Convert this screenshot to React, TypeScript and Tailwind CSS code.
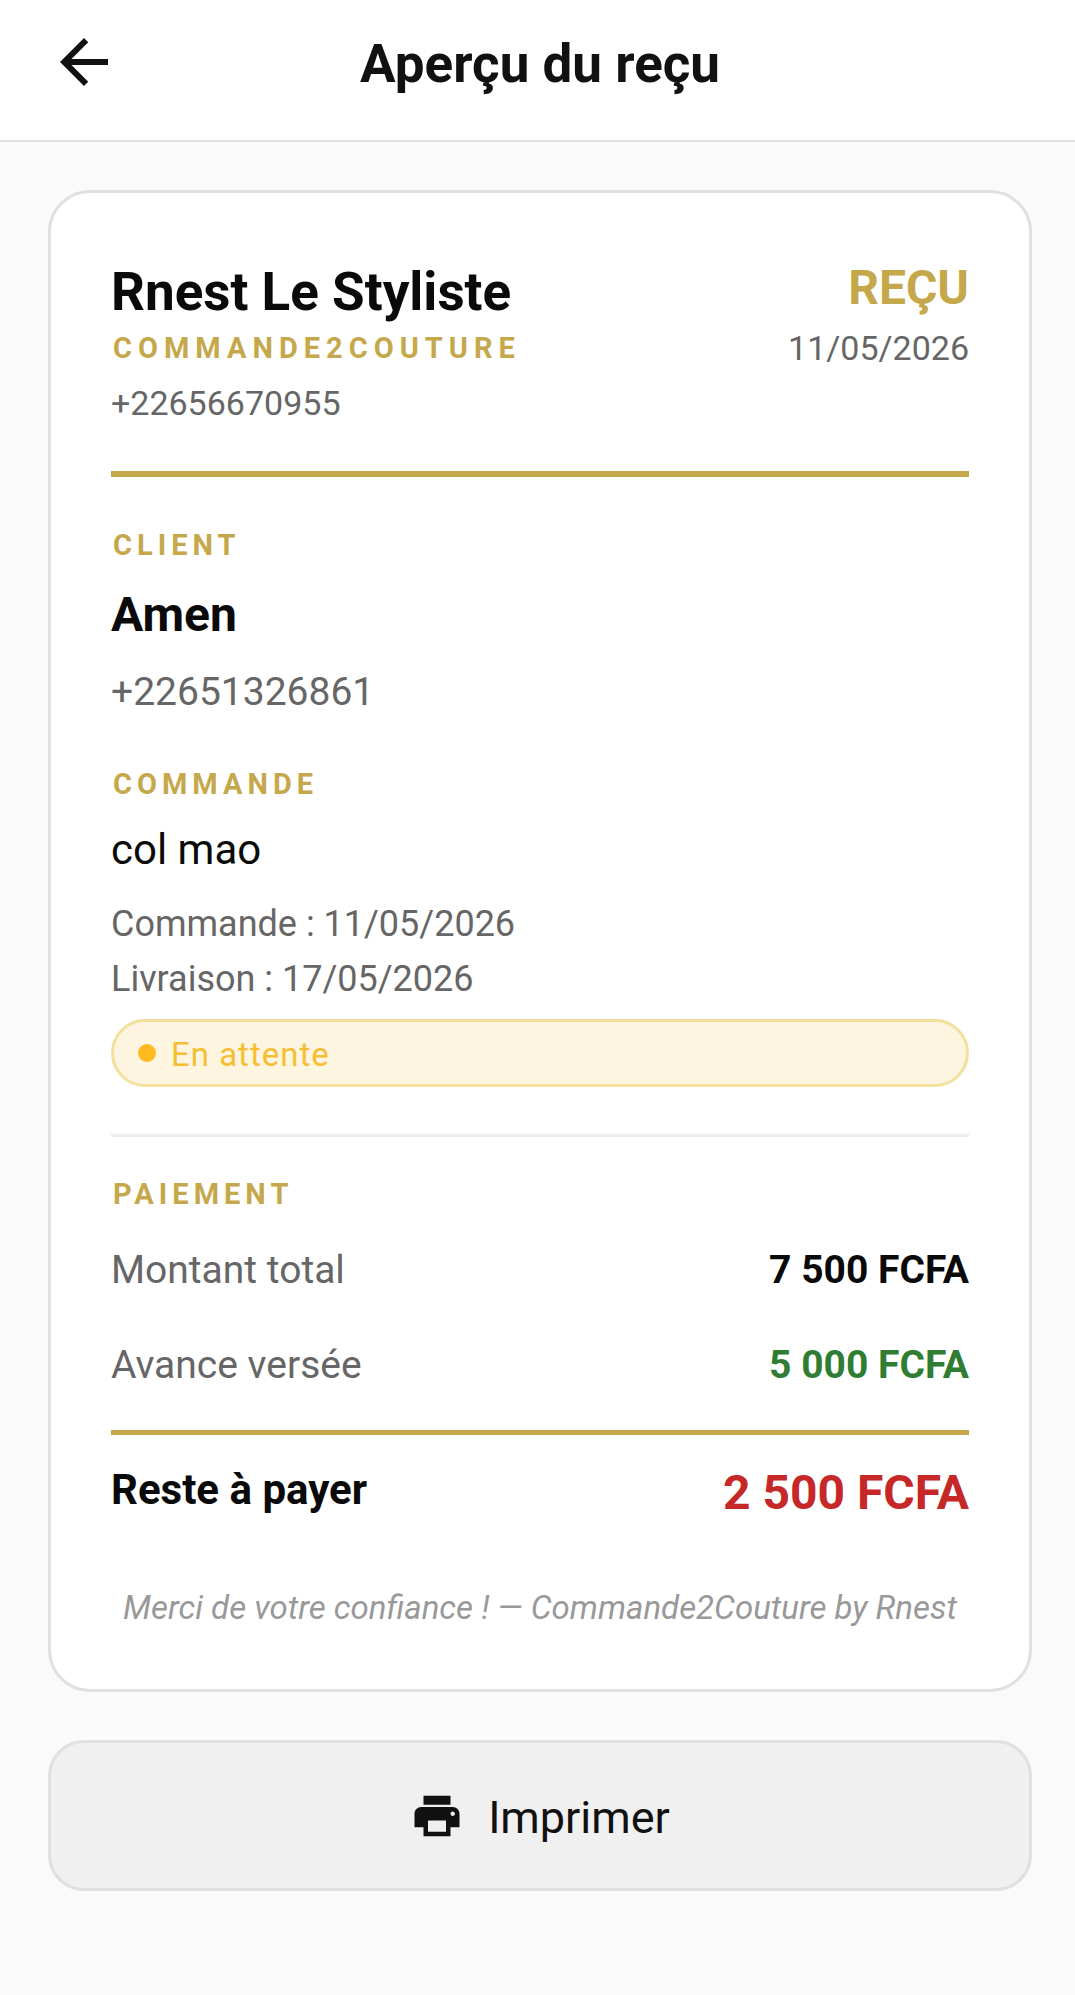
import { MdArrowBack, MdPrint } from "react-icons/md";

interface SectionTitleProps {
  children: string;
}

const SectionTitle = ({ children }: SectionTitleProps) => (
  <h3 className="pl-[2px] text-[29px] leading-[36px] font-bold tracking-[5px] text-[#c5a84b]">
    {children}
  </h3>
);

interface PaymentRowProps {
  label: string;
  amount: string;
  amountClass: string;
}

const PaymentRow = ({ label, amount, amountClass }: PaymentRowProps) => (
  <div className="flex items-center justify-between py-6">
    <dt className="text-[39px] leading-[47px] text-[#666666]">{label}</dt>
    <dd className={`text-[39px] leading-[47px] font-bold ${amountClass}`}>{amount}</dd>
  </div>
);

const App = () => (
  <div className="min-h-screen bg-[#fafafa] font-[Roboto,sans-serif] text-[#0a0a0a]">
    <header className="grid h-[142px] grid-cols-[72px_1fr_72px] items-center border-b-2 border-[#e0e0e0] bg-white pr-[43px] pb-4 pl-12 text-[#111111]">
      <button type="button" aria-label="Retour">
        <MdArrowBack className="size-[72px]" />
      </button>
      <h1 className="pt-1 text-center text-[53px] leading-[64px] font-bold">Aperçu du reçu</h1>
    </header>

    <main className="pt-12 pr-[43px] pl-12">
      <article className="rounded-[42px] border-3 border-[#e0e0e0] bg-white px-[60px] pt-[66px] pb-[57px]">
        <div className="flex items-start justify-between border-b-6 border-[#c5a84b] pb-[44px]">
          <div>
            <h2 className="text-[53px] leading-[66px] font-bold">Rnest Le Styliste</h2>
            <p className="pl-[2px] text-[29px] leading-[46px] font-bold tracking-[6px] text-[#c5a84b]">COMMANDE2COUTURE</p>
            <p className="pt-2 text-[34px] leading-[48px] text-[#666666]">+22656670955</p>
          </div>
          <div className="text-right">
            <p className="text-[48px] leading-[58px] font-bold text-[#c5a84b]">REÇU</p>
            <p className="text-[34px] leading-[62px] text-[#666666]">11/05/2026</p>
          </div>
        </div>

        <section className="pt-[50px]">
          <SectionTitle>CLIENT</SectionTitle>
          <p className="pt-[22px] text-[48px] leading-[60px] font-bold">Amen</p>
          <p className="pt-[23px] text-[39px] leading-[48px] text-[#666666]">+22651326861</p>
        </section>

        <section className="border-b-3 border-[#eeeeee] pt-[50px] pb-[47px]">
          <SectionTitle>COMMANDE</SectionTitle>
          <p className="pt-[21px] text-[42px] leading-[53px]">col mao</p>
          <p className="pt-[21px] text-[36px] leading-[55px] text-[#666666]">Commande : 11/05/2026</p>
          <p className="text-[36px] leading-[55px] text-[#666666]">Livraison : 17/05/2026</p>
          <div className="mt-3 flex h-[68px] items-center gap-[15px] rounded-full border-3 border-[#f2e09c] bg-[#fef5e1] px-6">
            <span className="size-[18px] rounded-full bg-[#ffba20]" />
            <span className="pt-1 text-[33px] tracking-[1px] text-[#f6bf33]">En attente</span>
          </div>
        </section>

        <section className="pt-[39px]">
          <SectionTitle>PAIEMENT</SectionTitle>
          <dl className="pt-[11px]">
            <PaymentRow label="Montant total" amount="7 500 FCFA" amountClass="" />
            <PaymentRow label="Avance versée" amount="5 000 FCFA" amountClass="text-[#2e7d32]" />
            <div className="mt-[17px] flex items-start justify-between border-t-5 border-[#c5a84b] pt-7">
              <dt className="text-[42px] leading-[53px] font-bold">Reste à payer</dt>
              <dd className="text-[48px] leading-[60px] font-bold text-[#c62828]">2 500 FCFA</dd>
            </div>
          </dl>
        </section>

        <p className="pt-[61px] text-center text-[33px] leading-[48px] text-[#999999] italic">
          Merci de votre confiance ! — Commande2Couture by Rnest
        </p>
      </article>

      <button
        type="button"
        className="mt-12 flex h-[151px] w-full items-center justify-center gap-6 rounded-[36px] border-3 border-[#e0e0e0] bg-[#f0f0f0] text-[45px] text-[#111111]"
      >
        <MdPrint className="size-[54px]" />
        <span className="pt-1">Imprimer</span>
      </button>
    </main>
  </div>
);

export default App;
